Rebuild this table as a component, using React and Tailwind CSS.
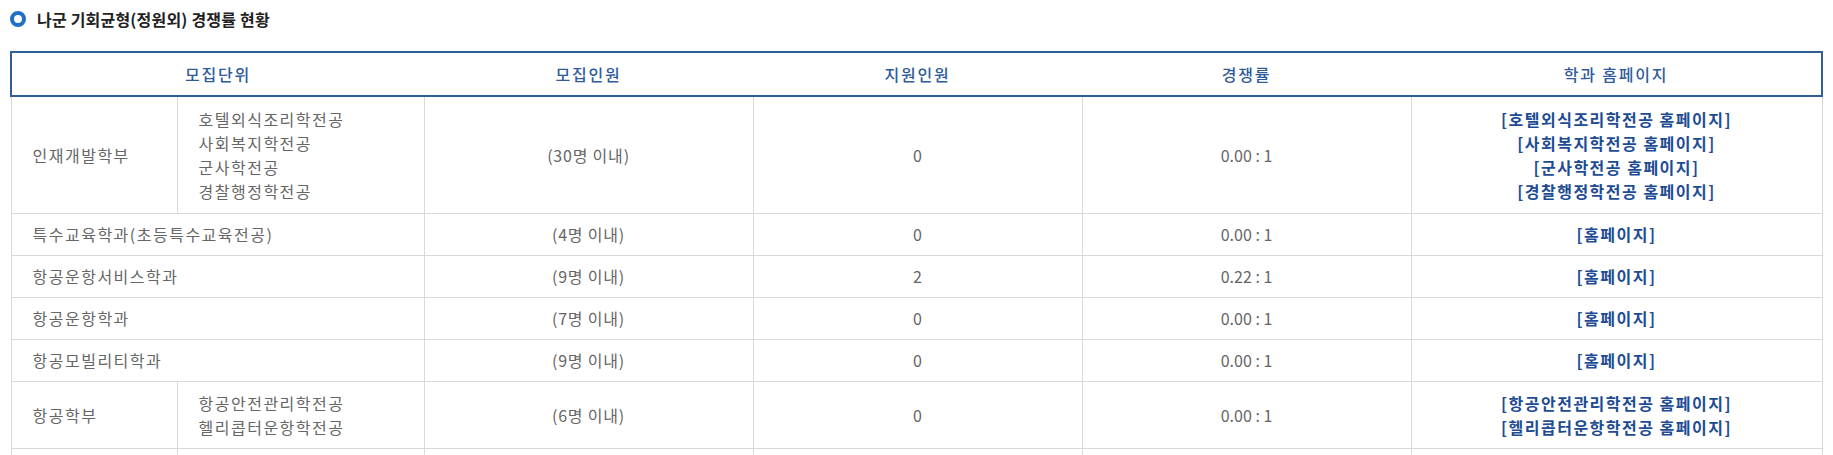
const rows = [
    {
        unit: '인재개발학부',
        majors: ['호텔외식조리학전공', '사회복지학전공', '군사학전공', '경찰행정학전공'],
        quota: '(30명 이내)',
        applied: '0',
        rate: '0.00 : 1',
        links: ['[호텔외식조리학전공 홈페이지]', '[사회복지학전공 홈페이지]', '[군사학전공 홈페이지]', '[경찰행정학전공 홈페이지]'],
        height: 'h-[117px]',
    },
    { unit: '특수교육학과(초등특수교육전공)', quota: '(4명 이내)', applied: '0', rate: '0.00 : 1', links: ['[홈페이지]'], height: 'h-[42px]' },
    { unit: '항공운항서비스학과', quota: '(9명 이내)', applied: '2', rate: '0.22 : 1', links: ['[홈페이지]'], height: 'h-[42px]' },
    { unit: '항공운항학과', quota: '(7명 이내)', applied: '0', rate: '0.00 : 1', links: ['[홈페이지]'], height: 'h-[42px]' },
    { unit: '항공모빌리티학과', quota: '(9명 이내)', applied: '0', rate: '0.00 : 1', links: ['[홈페이지]'], height: 'h-[42px]' },
    {
        unit: '항공학부',
        majors: ['항공안전관리학전공', '헬리콥터운항학전공'],
        quota: '(6명 이내)',
        applied: '0',
        rate: '0.00 : 1',
        links: ['[항공안전관리학전공 홈페이지]', '[헬리콥터운항학전공 홈페이지]'],
        height: 'h-[67px]',
    },
];

const td = 'border border-[#d9d9d9] align-middle py-0';
const th = 'border-y-2 border-[#2e5f97] font-medium tracking-[1.8px]';

const App = () => {
    return (
        <div
            className="min-h-screen bg-white px-[10px] text-[16px] text-[#666]"
            style={{ fontFamily: '"Noto Sans CJK KR", "Noto Sans", sans-serif' }}
        >
            {/* Title */}
            <div className="h-[38px] flex items-center">
                <span className="w-[16px] h-[16px] rounded-full border-[4px] border-[#1f6fc6] bg-white" />
                <h2 className="ml-[11px] text-[16px] font-bold text-[#222] tracking-[0.2px]">
                    나군 기회균형(정원외) 경쟁률 현황
                </h2>
            </div>

            <table className="mt-[13px] w-full table-fixed border-collapse leading-[24px]">
                <colgroup>
                    <col className="w-[166px]" />
                    <col className="w-[247px]" />
                    <col className="w-[329px]" />
                    <col className="w-[329px]" />
                    <col className="w-[329px]" />
                    <col />
                </colgroup>
                <thead>
                    <tr className="h-[44px] text-[#2f5b9c]">
                        <th colSpan={2} className={`${th} border-l-2`}>모집단위</th>
                        <th className={th}>모집인원</th>
                        <th className={th}>지원인원</th>
                        <th className={th}>경쟁률</th>
                        <th className={`${th} border-r-2`}>학과 홈페이지</th>
                    </tr>
                </thead>
                <tbody>
                    {rows.map((row) => (
                        <tr key={row.unit} className={row.height}>
                            {row.majors ? (
                                <>
                                    <td className={`${td} pl-[21px] tracking-[1.5px]`}>{row.unit}</td>
                                    <td className={`${td} pl-[21px] tracking-[1.5px]`}>
                                        {row.majors.map((m) => (
                                            <div key={m}>{m}</div>
                                        ))}
                                    </td>
                                </>
                            ) : (
                                <td colSpan={2} className={`${td} pl-[21px] tracking-[1.5px]`}>{row.unit}</td>
                            )}
                            <td className={`${td} text-center tracking-[0.8px]`}>{row.quota}</td>
                            <td className={`${td} text-center`}>{row.applied}</td>
                            <td className={`${td} text-center`}>{row.rate}</td>
                            <td className={`${td} text-center font-bold text-[#1d4c94] tracking-[1.5px]`}>
                                {row.links.map((l) => (
                                    <div key={l}>{l}</div>
                                ))}
                            </td>
                        </tr>
                    ))}
                    <tr className="h-[42px]">
                        <td className={td}></td>
                        <td className={td}></td>
                        <td className={td}></td>
                        <td className={td}></td>
                        <td className={td}></td>
                        <td className={td}></td>
                    </tr>
                </tbody>
            </table>
        </div>
    );
};

export default App;
